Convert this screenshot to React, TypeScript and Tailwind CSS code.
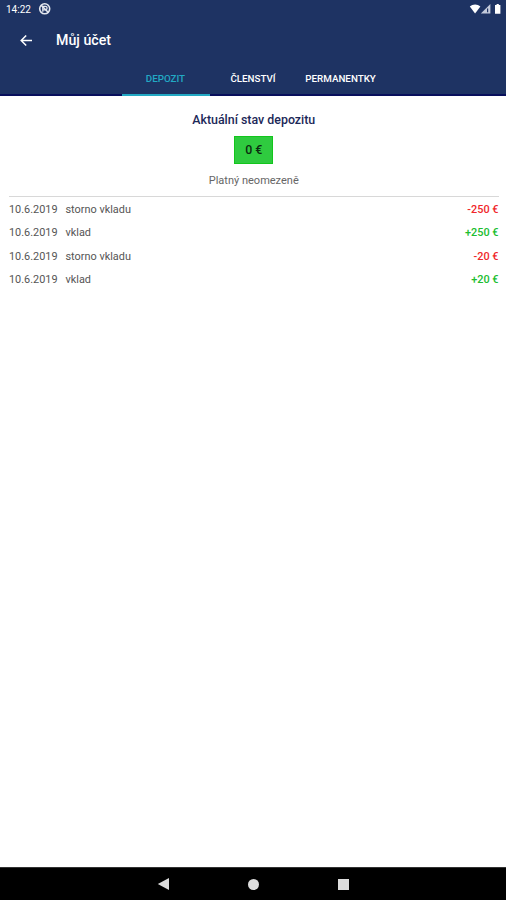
import clsx from 'clsx';
import React from 'react';

interface Transaction {
    date: string;
    label: string;
    amount: number;
}

const tabs = ['Depozit', 'Členství', 'Permanentky'];

const transactions: Transaction[] = [
    { date: '10.6.2019', label: 'storno vkladu', amount: -250 },
    { date: '10.6.2019', label: 'vklad', amount: 250 },
    { date: '10.6.2019', label: 'storno vkladu', amount: -20 },
    { date: '10.6.2019', label: 'vklad', amount: 20 },
];

const StatusBar = () => (
    <div className="flex h-[18px] items-center justify-between pr-[3px] pl-1.5 text-white">
        <div className="flex items-center gap-[7px] pt-px">
            <span className="text-[10px] leading-none">14:22</span>
            <svg width="13" height="13" viewBox="0 0 13 13" fill="none">
                <circle
                    cx="6.7"
                    cy="5.8"
                    r="5"
                    stroke="#e3e7ef"
                    strokeWidth="1.6"
                />
                <path
                    d="M4.8 8.8V3.4h2.6a1.7 1.7 0 0 1 0 3.4H4.8"
                    stroke="#e3e7ef"
                    strokeWidth="1.3"
                />
                <path d="M3 2.1l7.4 7.4" stroke="#e3e7ef" strokeWidth="1.5" />
            </svg>
        </div>
        <svg width="34" height="12" viewBox="0 0 34 12" fill="#fff">
            <path d="M.8 3.6C3.6.7 8.6.7 11.4 3.6L6.1 10.4z" />
            <path d="M21.4 1v9.6h-9.6z" fill="#c3cadb" />
            <path d="M18.6 5.4v3.8" stroke="#1e3363" strokeWidth="1.2" />
            <path d="M26 2h1.6V1h2.2v1h1.6v8.8H26z" />
        </svg>
    </div>
);

const Header = () => (
    <header className="flex h-24 flex-col bg-[#1e3363]">
        <StatusBar />
        <div className="flex h-[45px] items-center pl-5">
            <svg
                width="12"
                height="12"
                viewBox="0 0 12 12"
                fill="none"
                stroke="#fff"
                strokeWidth="1.5"
            >
                <path d="M12 5.5H1.2M6.2.5l-5 5 5 5" />
            </svg>
            <h1 className="ml-6 text-[14.2px] leading-none font-medium text-white">
                Můj účet
            </h1>
        </div>
        <nav className="flex h-[33px] justify-center border-b-2 border-[#080f5c] pl-px">
            {tabs.map((tab, index) => (
                <button
                    key={tab}
                    className={clsx(
                        '-mb-0.5 flex w-[87.6px] items-center justify-center border-b-2 pt-0.5 pr-px text-[9.8px] font-medium uppercase',
                        index === 0
                            ? 'border-[#22a9c4] text-[#22a9c4]'
                            : 'border-transparent text-white',
                    )}
                >
                    {tab}
                </button>
            ))}
        </nav>
    </header>
);

const TransactionRow = ({ date, label, amount }: Transaction) => (
    <li className="flex h-[23.5px] items-center text-[10.9px] text-[#555]">
        <span className="w-[56.5px]">{date}</span>
        <span>{label}</span>
        <span
            className={clsx(
                'ml-auto font-medium',
                amount < 0 ? 'text-[#f0272b]' : 'text-[#20bd30]',
            )}
        >
            {amount > 0 && '+'}
            {amount} €
        </span>
    </li>
);

const NavigationBar = () => (
    <footer className="flex h-[33px] items-center justify-center border-t border-[#333] bg-black">
        <svg width="12" height="14" viewBox="0 0 12 14" fill="#ddd">
            <path d="M12 1v12L.8 7z" />
        </svg>
        <div className="ml-[79px] size-[11px] rounded-full bg-[#ddd]" />
        <div className="ml-[79px] size-[11px] bg-[#ddd]" />
    </footer>
);

const App = () => (
    <div className="flex h-screen flex-col bg-white font-[Roboto,sans-serif]">
        <Header />
        <main className="flex-1 pr-[7.5px] pl-[9px]">
            <div className="flex h-[101px] flex-col items-center border-b border-[#d8d8d8] pt-4">
                <h2 className="text-[12.4px] leading-4 font-medium text-[#1c2858]">
                    Aktuální stav depozitu
                </h2>
                <div className="mt-2 flex h-7 w-[39px] items-center justify-center border border-[#12c61c] bg-[#2fcb3f] pt-px text-[12.4px] font-medium text-[#0b2c10]">
                    0 €
                </div>
                <p className="mt-[9px] text-[11px] leading-4 text-[#666]">
                    Platný neomezeně
                </p>
            </div>
            <ul className="pt-px">
                {transactions.map((transaction, index) => (
                    <TransactionRow key={index} {...transaction} />
                ))}
            </ul>
        </main>
        <NavigationBar />
    </div>
);

export default App;
